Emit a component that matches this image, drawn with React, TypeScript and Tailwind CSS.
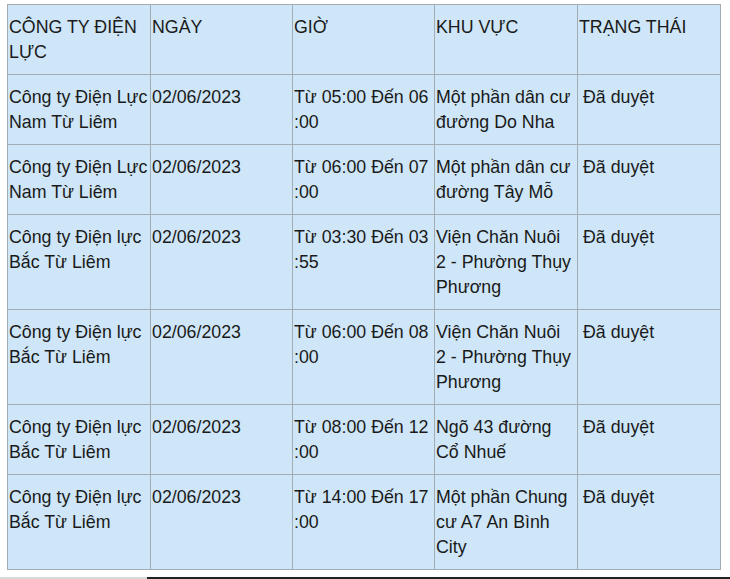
const rows: string[][][] = [
  [["Công ty Điện Lực", "Nam Từ Liêm"], ["02/06/2023"], ["Từ 05:00 Đến 06", ":00"], ["Một phần dân cư", "đường Do Nha"], ["Đã duyệt"]],
  [["Công ty Điện Lực", "Nam Từ Liêm"], ["02/06/2023"], ["Từ 06:00 Đến 07", ":00"], ["Một phần dân cư", "đường Tây Mỗ"], ["Đã duyệt"]],
  [["Công ty Điện lực", "Bắc Từ Liêm"], ["02/06/2023"], ["Từ 03:30 Đến 03", ":55"], ["Viện Chăn Nuôi", "2 - Phường Thụy", "Phương"], ["Đã duyệt"]],
  [["Công ty Điện lực", "Bắc Từ Liêm"], ["02/06/2023"], ["Từ 06:00 Đến 08", ":00"], ["Viện Chăn Nuôi", "2 - Phường Thụy", "Phương"], ["Đã duyệt"]],
  [["Công ty Điện lực", "Bắc Từ Liêm"], ["02/06/2023"], ["Từ 08:00 Đến 12", ":00"], ["Ngõ 43 đường", "Cổ Nhuế"], ["Đã duyệt"]],
  [["Công ty Điện lực", "Bắc Từ Liêm"], ["02/06/2023"], ["Từ 14:00 Đến 17", ":00"], ["Một phần Chung", "cư A7 An Bình", "City"], ["Đã duyệt"]],
];

const header: string[][] = [["CÔNG TY ĐIỆN", "LỰC"], ["NGÀY"], ["GIỜ"], ["KHU VỰC"], ["TRẠNG THÁI"]];

function Cell({ lines, extra = "" }: { lines: string[]; extra?: string }) {
  return (
    <td className={"border border-[#a2acb4] bg-[#cee6f7] align-top pr-0 pt-[10px] pb-[9px] whitespace-pre overflow-visible " + extra}>
      {lines.map((l, i) => (
        <div key={i}>{l}</div>
      ))}
    </td>
  );
}

export default function App() {
  return (
    <div className="w-[730px] h-[579px] bg-white flex flex-col font-['Liberation_Sans',Arial,sans-serif] text-[17.8px] leading-[25px] text-[#1a1a1a]">
      <table className="ml-[7px] mt-[4px] w-[713px] table-fixed border-collapse">
        <colgroup>
          <col className="w-[143px]" />
          <col className="w-[142px]" />
          <col className="w-[142px]" />
          <col className="w-[143px]" />
          <col className="w-[143px]" />
        </colgroup>
        <thead>
          <tr>
            {header.map((h, i) => (
              <Cell key={i} lines={h} extra="pl-[1px]" />
            ))}
          </tr>
        </thead>
        <tbody>
          {rows.map((r, i) => (
            <tr key={i}>
              {r.map((c, j) => (
                <Cell key={j} lines={c} extra={j === 4 ? "pl-[5px]" : "pl-[1px]"} />
              ))}
            </tr>
          ))}
        </tbody>
      </table>
      <div className="mt-auto flex h-[2px]">
        <div className="w-[147px] bg-[#d9d9d9]" />
        <div className="flex-1 bg-[#222222]" />
      </div>
    </div>
  );
}
